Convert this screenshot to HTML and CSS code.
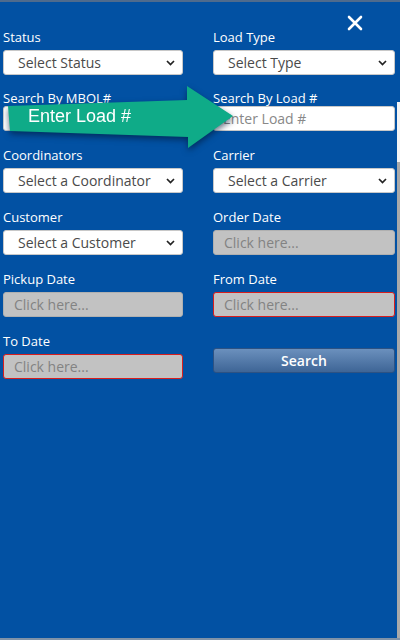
FILE: index.html
```html
<!DOCTYPE html>
<html>
<head>
<meta charset="utf-8">
<link rel="stylesheet" href="styles.css">
</head>
<body>
<div class="page">
  <div class="panel">
    <div class="header">
      <button class="close" aria-label="Close">
        <svg width="16" height="16" viewBox="0 0 16 16"><path d="M2 2 L14 14 M14 2 L2 14" stroke="#fff" stroke-width="2.6" stroke-linecap="round"/></svg>
      </button>
    </div>
    <div class="form">
      <div class="field">
        <div class="label">Status</div>
        <div class="select"><span>Select Status</span><svg class="chev" width="9" height="6" viewBox="0 0 9 6"><path d="M1 1 L4.5 4.5 L8 1" fill="none" stroke="#222" stroke-width="1.7"/></svg></div>
      </div>
      <div class="field">
        <div class="label">Load Type</div>
        <div class="select"><span>Select Type</span><svg class="chev" width="9" height="6" viewBox="0 0 9 6"><path d="M1 1 L4.5 4.5 L8 1" fill="none" stroke="#222" stroke-width="1.7"/></svg></div>
      </div>
      <div class="field tight">
        <div class="label">Search By MBOL#</div>
        <div class="input white"><span class="ph"></span></div>
      </div>
      <div class="field tight">
        <div class="label">Search By Load #</div>
        <div class="input white"><span class="ph">Enter Load #</span></div>
      </div>
      <div class="field">
        <div class="label">Coordinators</div>
        <div class="select"><span>Select a Coordinator</span><svg class="chev" width="9" height="6" viewBox="0 0 9 6"><path d="M1 1 L4.5 4.5 L8 1" fill="none" stroke="#222" stroke-width="1.7"/></svg></div>
      </div>
      <div class="field">
        <div class="label">Carrier</div>
        <div class="select"><span>Select a Carrier</span><svg class="chev" width="9" height="6" viewBox="0 0 9 6"><path d="M1 1 L4.5 4.5 L8 1" fill="none" stroke="#222" stroke-width="1.7"/></svg></div>
      </div>
      <div class="field">
        <div class="label">Customer</div>
        <div class="select"><span>Select a Customer</span><svg class="chev" width="9" height="6" viewBox="0 0 9 6"><path d="M1 1 L4.5 4.5 L8 1" fill="none" stroke="#222" stroke-width="1.7"/></svg></div>
      </div>
      <div class="field">
        <div class="label">Order Date</div>
        <div class="input date"><span class="ph">Click here...</span></div>
      </div>
      <div class="field">
        <div class="label">Pickup Date</div>
        <div class="input date"><span class="ph">Click here...</span></div>
      </div>
      <div class="field">
        <div class="label">From Date</div>
        <div class="input date invalid"><span class="ph">Click here...</span></div>
      </div>
      <div class="field">
        <div class="label">To Date</div>
        <div class="input date invalid"><span class="ph">Click here...</span></div>
      </div>
      <div class="field">
        <button class="search">Search</button>
      </div>
    </div>
  </div>
  <div class="edge"></div>
  <div class="callout">
    <svg width="240" height="160" viewBox="0 0 240 160">
      <polygon points="8,106 187,100 187,86 233,116 188,148 188,137 10,131" fill="#0fab88"/>
    </svg>
    <span class="callout-text">Enter Load #</span>
  </div>
</div>
</body>
</html>
```

FILE: styles.css
```css
* { box-sizing: border-box; }
html, body { margin: 0; padding: 0; }
body {
  width: 400px;
  height: 640px;
  overflow: hidden;
  font-family: "Open Sans", "Noto Sans", sans-serif;
  background: #0251a3;
}
.page {
  position: relative;
  display: flex;
  width: 400px;
  height: 640px;
  border-top: 2px solid #4f6b8d;
  border-bottom: 2px solid #8093a8;
}
.panel {
  width: 397px;
  background: #0251a3;
}
.edge {
  width: 3px;
  background: linear-gradient(#0251a3 0, #0251a3 100px, #f4f4f4 100px, #f4f4f4 160px, #a9a9a9 160px, #a9a9a9 100%);
}
.header {
  height: 27px;
  display: flex;
  justify-content: flex-end;
  padding-right: 34px;
  padding-top: 13px;
}
.close {
  width: 16px;
  height: 16px;
  padding: 0;
  border: 0;
  background: none;
  display: block;
}
.close svg { display: block; }
.form {
  display: grid;
  grid-template-columns: 180px 182px;
  column-gap: 30px;
  row-gap: 16px;
  padding-left: 3px;
}
.field {
  display: flex;
  flex-direction: column;
}
.label {
  color: #fff;
  font-size: 13px;
  font-weight: 500;
  line-height: 16px;
  margin-bottom: 5px;
  white-space: nowrap;
}
.field.tight .label { margin-bottom: 0; margin-top: -1px; }
.select, .input {
  height: 25px;
  border-radius: 3px;
  font-size: 14px;
  display: flex;
  align-items: center;
}
.select {
  background: #fff;
  border: 1px solid #c8c8c8;
  color: #4a4a4a;
  padding: 0 7px 0 14px;
  justify-content: space-between;
}
.chev { display: block; }
.input {
  padding-left: 9px;
  border: 1px solid #c8c8c8;
}
.input.white { background: #fff; }
.input.white .ph { color: #888; }
.input.date {
  background: #c2c2c2;
  border-color: #b0b0b0;
  padding-left: 10px;
}
.input.date .ph { color: #838383; }
.input.invalid { border-color: #d81e1e; }
.search {
  margin-top: 15px;
  height: 25px;
  border: 1px solid #2d5283;
  border-radius: 3px;
  background: linear-gradient(#6b90bd, #3e6596);
  color: #fff;
  font-family: "Open Sans", "Noto Sans", sans-serif;
  font-size: 14px;
  font-weight: 600;
  padding: 0;
}
.callout {
  position: absolute;
  left: 0;
  top: -2px;
  width: 240px;
  height: 160px;
  filter: drop-shadow(0 3px 3px rgba(0, 20, 50, 0.6));
}
.callout svg { display: block; }
.callout-text {
  position: absolute;
  left: 28px;
  top: 105px;
  font-family: "Liberation Sans", Arial, sans-serif;
  font-size: 18px;
  line-height: 22px;
  color: #fff;
}
```
